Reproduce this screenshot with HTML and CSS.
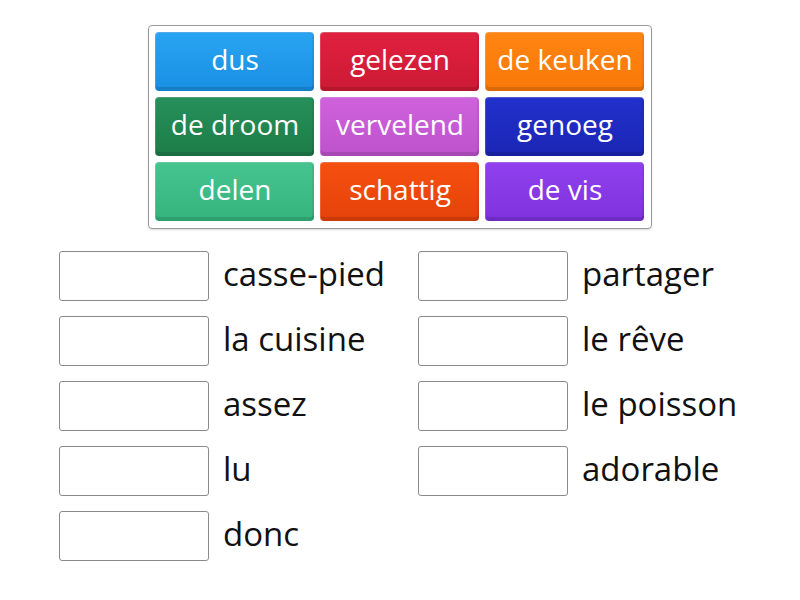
FILE: index.html
```html
<!DOCTYPE html>
<html>
<head>
<meta charset="utf-8">
<link rel="stylesheet" href="styles.css">
</head>
<body>
<div class="bank">
  <div class="tile blue">dus</div>
  <div class="tile red">gelezen</div>
  <div class="tile orange">de keuken</div>
  <div class="tile dgreen">de droom</div>
  <div class="tile pink">vervelend</div>
  <div class="tile navy">genoeg</div>
  <div class="tile lgreen">delen</div>
  <div class="tile redorange">schattig</div>
  <div class="tile purple">de vis</div>
</div>
<div class="answers">
  <div class="col">
    <div class="row"><div class="slot"></div><span class="word">casse-pied</span></div>
    <div class="row"><div class="slot"></div><span class="word">la cuisine</span></div>
    <div class="row"><div class="slot"></div><span class="word">assez</span></div>
    <div class="row"><div class="slot"></div><span class="word">lu</span></div>
    <div class="row"><div class="slot"></div><span class="word">donc</span></div>
  </div>
  <div class="col">
    <div class="row"><div class="slot"></div><span class="word">partager</span></div>
    <div class="row"><div class="slot"></div><span class="word">le rêve</span></div>
    <div class="row"><div class="slot"></div><span class="word">le poisson</span></div>
    <div class="row"><div class="slot"></div><span class="word">adorable</span></div>
  </div>
</div>
</body>
</html>
```
FILE: styles.css
```css
html, body {
  margin: 0;
  padding: 0;
  background: #fff;
  font-family: "Open Sans", Lato, sans-serif;
}
.bank {
  box-sizing: border-box;
  width: 504px;
  margin: 25px 0 0 148px;
  padding: 6px 6px 7px 6px;
  border: 1px solid #9a9a9a;
  border-radius: 4px;
  display: grid;
  grid-template-columns: repeat(3, 159px);
  grid-auto-rows: 59px;
  gap: 6px;
  box-shadow: 0 1px 2px rgba(0,0,0,0.15);
}
.tile {
  box-sizing: border-box;
  border-radius: 4px;
  color: #fff;
  font-size: 28px;
  display: flex;
  align-items: center;
  justify-content: center;
  padding-bottom: 6px;
  border-top: 1px solid rgba(255,255,255,0.25);
  border-left: 1px solid rgba(255,255,255,0.15);
  box-shadow: inset 0 -4px 0 rgba(0,0,0,0.12), inset -2px 0 0 rgba(0,0,0,0.06);
}
.blue { background: linear-gradient(#28a4f2, #1a8fe3); }
.red { background: linear-gradient(#e0203f, #cc1a34); }
.orange { background: linear-gradient(#ff8512, #f97808); }
.dgreen { background: linear-gradient(#26905a, #1d7c48); }
.pink { background: linear-gradient(#cf62dc, #be52cd); }
.navy { background: linear-gradient(#2230cc, #1b26b4); }
.lgreen { background: linear-gradient(#45c48f, #36b47e); }
.redorange { background: linear-gradient(#f5500f, #e5420a); }
.purple { background: linear-gradient(#9040ee, #7e32dc); }

.answers {
  display: flex;
  margin: 22px 0 0 59px;
  gap: 0;
}
.col {
  width: 359px;
  display: flex;
  flex-direction: column;
  gap: 15px;
}
.row {
  display: flex;
  align-items: center;
  height: 50px;
}
.slot {
  box-sizing: border-box;
  width: 150px;
  height: 50px;
  border: 1px solid #8a8a8a;
  border-radius: 3px;
  flex: none;
}
.word {
  margin-left: 14px;
  font-size: 33px;
  color: #111;
  padding-bottom: 6px;
}
```
